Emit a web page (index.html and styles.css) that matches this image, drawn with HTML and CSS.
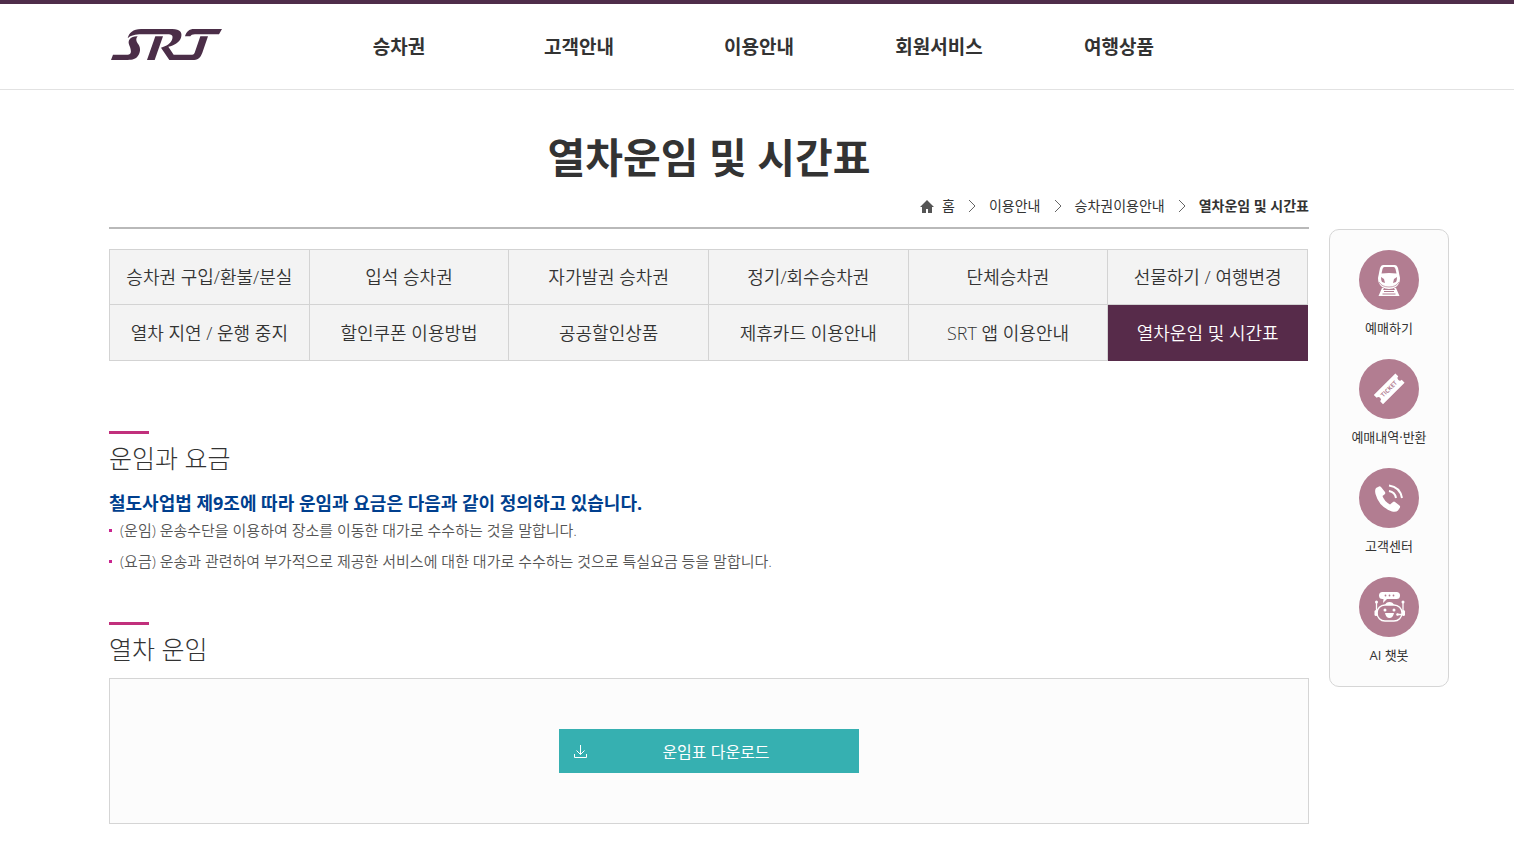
FILE: index.html
```html
<!DOCTYPE html>
<html lang="ko">
<head>
    <meta charset="UTF-8">
    <meta name="viewport" content="width=device-width, initial-scale=1.0">
    <title>열차운임 및 시간표 - SRT</title>
    <link rel="stylesheet" href="styles.css">
</head>
<body>
    <header class="header">
        <a href="#" class="logo" aria-label="SRT">
            <svg width="111" height="31" viewBox="0 0 333 93" fill="#4b2e48">
                <path d="M50 28C54 12 66 0 90 0H184C208 0 215 12 210 26C205 40 190 49 172 53L188 77H238C246 77 249 76 251 71L268 22H291L274 71C268 87 260 93 244 93H175L150 56C166 51 180 44 184 29C187 19 181 16 170 16H92C72 16 60 19 50 28Z"/>
                <path d="M133 22H156L131 93H108Z"/>
                <path d="M54 34C58 26 66 22 80 22C73 30 76 38 82 46C90 58 88 72 80 82C74 90 66 93 50 93H0L6 77H50C62 77 61 66 57 54C54 46 51 42 54 34Z"/>
                <path d="M222 22C226 8 234 0 250 0H333L324 16H252C244 16 240 18 238 22Z"/>
            </svg>
        </a>
        <nav class="gnb">
            <a href="#">승차권</a>
            <a href="#">고객안내</a>
            <a href="#">이용안내</a>
            <a href="#">회원서비스</a>
            <a href="#">여행상품</a>
        </nav>
    </header>

    <div class="wrap">
        <main class="content">
            <h1>열차운임 및 시간표</h1>
            <div class="location">
                <a href="#" class="home">
                    <svg width="14" height="13" viewBox="0 0 14 13" fill="#555"><path d="M7 0L14 7H12V13H8V9H6V13H2V7H0Z"/></svg>
                    홈
                </a>
                <svg class="arrow" width="8" height="14" viewBox="0 0 8 14"><path d="M1 1L7 7L1 13"/></svg>
                <a href="#">이용안내</a>
                <svg class="arrow" width="8" height="14" viewBox="0 0 8 14"><path d="M1 1L7 7L1 13"/></svg>
                <a href="#">승차권이용안내</a>
                <svg class="arrow" width="8" height="14" viewBox="0 0 8 14"><path d="M1 1L7 7L1 13"/></svg>
                <strong>열차운임 및 시간표</strong>
            </div>

            <ul class="tabs">
                <li><a href="#">승차권 구입/환불/분실</a></li>
                <li><a href="#">입석 승차권</a></li>
                <li><a href="#">자가발권 승차권</a></li>
                <li><a href="#">정기/회수승차권</a></li>
                <li><a href="#">단체승차권</a></li>
                <li><a href="#">선물하기 / 여행변경</a></li>
                <li><a href="#">열차 지연 / 운행 중지</a></li>
                <li><a href="#">할인쿠폰 이용방법</a></li>
                <li><a href="#">공공할인상품</a></li>
                <li><a href="#">제휴카드 이용안내</a></li>
                <li><a href="#">SRT 앱 이용안내</a></li>
                <li class="on"><a href="#">열차운임 및 시간표</a></li>
            </ul>

            <section>
                <h2>운임과 요금</h2>
                <p class="lead">철도사업법 제9조에 따라 운임과 요금은 다음과 같이 정의하고 있습니다.</p>
                <ul class="dot-list">
                    <li>(운임) 운송수단을 이용하여 장소를 이동한 대가로 수수하는 것을 말합니다.</li>
                    <li>(요금) 운송과 관련하여 부가적으로 제공한 서비스에 대한 대가로 수수하는 것으로 특실요금 등을 말합니다.</li>
                </ul>
            </section>

            <section>
                <h2>열차 운임</h2>
                <div class="down-box">
                    <button type="button" class="btn-down">
                        <svg width="14" height="13" viewBox="0 0 14 13" fill="none" stroke="#fff"><path d="M6.5 0V9.500M2.500 5.500L6.500 9.500L10.500 5.500M0.500 9V12.500H12.500V9"/></svg>
                        <span>운임표 다운로드</span>
                    </button>
                </div>
            </section>
        </main>

        <!-- 퀵메뉴 -->
        <aside class="quick">
            <a href="#">
                <svg viewBox="0 0 60 60">
                    <path fill="#fff" d="M24 15H36Q38 15 39 18L41 28Q41 34 37 37Q34 39 30 39Q26 39 23 37Q19 34 19 28L21 18Q22 15 24 15Z"/>
                    <path fill="#b27d91" d="M25.500 17H34.500Q36 17 36.500 19L37.500 23.500Q30 22.500 22.500 23.500L23.500 19Q24 17 25.500 17ZM22 27L25 29L26 33L23 32Q22 31 22 27ZM38 27L35 29L34 33L37 32Q38 31 38 27Z"/>
                    <path fill="none" stroke="#b27d91" stroke-width=".7" d="M20 32Q23 37 30 37Q37 37 40 32"/>
                    <path fill="#fff" d="M23 38L19.500 46H40.500L37 38H35L36 40H24L25 38Z"/>
                    <path fill="none" stroke="#b27d91" stroke-width="1" d="M25 41.500H35M23.500 44H36.500"/>
                </svg>
                <span>예매하기</span>
            </a>
            <a href="#">
                <svg viewBox="0 0 60 60">
                    <g transform="rotate(-45 30 30)">
                        <path fill="#fff" d="M15 23.500H45.500V27.500A2.500 2.500 0 0 0 45.500 32.500V36.500H15V32.500A2.500 2.500 0 0 0 15 27.500Z"/>
                        <text x="30" y="32" text-anchor="middle" class="ticket">TICKET</text>
                    </g>
                </svg>
                <span>예매내역·반환</span>
            </a>
            <a href="#">
                <svg viewBox="0 0 60 60">
                    <path fill="#fff" d="M17 20L20 18.500Q21 18 22 19L26 24Q26.500 25 26 26L23.500 28Q25 33 31 36.500L34 34Q35 33 36 34L40.500 37.500Q41.500 38.500 41 39.500L39 42.500Q37 44.500 33 43.500Q20 39 16.500 26Q15.500 22 17 20Z"/>
                    <path fill="none" stroke="#fff" stroke-width="2" d="M30 23Q36 24 37 30M30 17.500Q41 19 43 30"/>
                </svg>
                <span>고객센터</span>
            </a>
            <a href="#">
                <svg viewBox="0 0 60 60">
                    <path fill="#fff" d="M23.500 15H37.500A3.500 3.500 0 0 1 37.500 22H28L24 26L24.500 22H23.500A3.500 3.500 0 0 1 23.500 15ZM26 28Q27 25 30.500 25Q34 25 35 28ZM26 36H35Q34 41 30.500 41Q27 41 26 36Z"/>
                    <g fill="#b27d91"><circle cx="26.500" cy="18.500" r=".9"/><circle cx="30.500" cy="18.500" r=".9"/><circle cx="34.500" cy="18.500" r=".9"/></g>
                    <rect x="18" y="28" width="25" height="16" rx="8" fill="none" stroke="#fff" stroke-width="1.400"/>
                    <path fill="none" stroke="#fff" stroke-width="1.300" d="M17.500 25V38M44 25V38M38 37.500H43"/>
                    <g fill="#fff"><circle cx="17.500" cy="25" r="1.500"/><circle cx="44" cy="25" r="1.500"/><rect x="15.500" y="33" width="3" height="6" rx="1.500"/><rect x="43" y="33" width="3" height="6" rx="1.500"/><circle cx="26" cy="33" r="1.500"/><circle cx="35" cy="33" r="1.500"/><circle cx="38.500" cy="37.500" r="1.300"/></g>
                </svg>
                <span>AI 챗봇</span>
            </a>
        </aside>
    </div>
</body>
</html>
```
FILE: styles.css
```css
* {
    box-sizing: border-box;
}
body {
    margin: 0;
    font-family: "Open Sans", "Noto Sans CJK KR", sans-serif;
    font-size: 14px;
    font-weight: 350;
    color: #333;
    background: #fff;
}
h1, h2, p, ul {
    margin: 0;
    padding: 0;
}
ul {
    list-style: none;
}
a {
    color: inherit;
    text-decoration: none;
}

/* header */
.header {
    display: flex;
    align-items: flex-start;
    height: 90px;
    padding: 25px 0 0 111px;
    border-top: 4px solid #4f2d4a;
    border-bottom: 1px solid #e2e2e2;
}
.logo svg {
    display: block;
}
.gnb {
    display: flex;
    margin-left: 87px;
}
.gnb a {
    width: 180px;
    font-size: 19px;
    font-weight: 600;
    line-height: 36px;
    text-align: center;
}

/* layout */
.wrap {
    display: flex;
    align-items: flex-start;
    gap: 20px;
    padding: 0 65px 28px 109px;
}
.content {
    flex: 1;
    min-width: 0;
}
h1 {
    padding-top: 38px;
    font-size: 41px;
    font-weight: 600;
    line-height: 58px;
    text-align: center;
}
.location {
    display: flex;
    justify-content: flex-end;
    align-items: center;
    gap: 13px;
    margin-top: 10px;
    padding-bottom: 11px;
    border-bottom: 2px solid #b9b9b9;
    font-weight: 400;
    line-height: 20px;
}
.home {
    display: flex;
    align-items: center;
    gap: 8px;
}
.arrow {
    fill: none;
    stroke: #666;
}

/* tabs */
.tabs {
    display: grid;
    grid-template-columns: repeat(6, 1fr);
    margin: 20px 1px 70px 0;
    border-top: 1px solid #d3d3d3;
    border-left: 1px solid #d3d3d3;
}
.tabs a {
    display: block;
    padding-top: 1px;
    border-right: 1px solid #d3d3d3;
    border-bottom: 1px solid #d3d3d3;
    background: #f3f3f3;
    font-size: 18px;
    line-height: 53px;
    text-align: center;
    white-space: nowrap;
}
.tabs li:nth-child(n+7) a {
    line-height: 54px;
}
.tabs .on a {
    border-color: #572b4a;
    background: #572b4a;
    color: #fff;
}

/* contents */
section + section {
    margin-top: 45px;
}
h2 {
    margin-bottom: 12px;
    font-size: 25px;
    font-weight: 300;
    line-height: 34px;
}
h2::before {
    content: "";
    display: block;
    width: 40px;
    height: 3px;
    margin-bottom: 7px;
    background: #c1307c;
}
.lead {
    padding-top: 4px;
    color: #003f8e;
    font-size: 18px;
    font-weight: bold;
    line-height: 24px;
}
.dot-list li {
    display: flex;
    align-items: center;
    gap: 8px;
    color: #555;
    font-size: 15px;
    line-height: 31px;
}
.dot-list li::before {
    content: "";
    width: 3px;
    height: 3px;
    background: #c9248f;
}
.down-box {
    display: flex;
    justify-content: center;
    padding: 50px 20px;
    border: 1px solid #d5d5d5;
    background: #fcfcfc;
}
.btn-down {
    display: flex;
    align-items: center;
    width: 300px;
    height: 44px;
    padding: 0 15px;
    border: 0;
    background: #36b0b1;
    color: #fff;
    font-family: inherit;
    font-size: 16px;
    cursor: pointer;
}
.btn-down span {
    flex: 1;
}

/* quick menu */
.quick {
    display: flex;
    flex-direction: column;
    gap: 21px;
    width: 120px;
    margin-top: 139px;
    padding: 20px 0 21px;
    border: 1px solid #d6d6d6;
    border-radius: 10px;
    background: #fcfcfc;
}
.quick a {
    display: flex;
    flex-direction: column;
    align-items: center;
    gap: 8px;
    font-size: 13px;
    font-weight: 400;
    line-height: 20px;
}
.quick svg {
    width: 60px;
    height: 60px;
    border-radius: 50%;
    background: #b27d91;
}
.ticket {
    fill: #b27d91;
    font-size: 6px;
    font-weight: bold;
}
```
